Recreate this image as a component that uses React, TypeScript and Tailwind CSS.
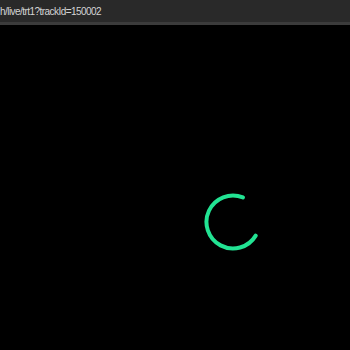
export default function App() {
  return (
    <div className="w-[350px] h-[350px] bg-black flex flex-col overflow-hidden">
      <div
        className="h-[22px] bg-[#292929] flex items-center text-[10px] tracking-[-0.55px] text-[#d4d4d4] whitespace-nowrap leading-none pt-[1px]"
        style={{ fontFamily: '"Liberation Sans", Arial, sans-serif' }}
      >
        h/live/trt1?trackId=150002
      </div>
      <div className="h-[3px] bg-[#3b3b3b]" />
      <div className="flex-1 flex justify-end items-start pt-[168px] pr-[88px]">
        <svg width="58" height="58" viewBox="0 0 58 58">
          <path
            d="M 38.9 4.4 A 26.5 26.5 0 1 0 51.7 42.6"
            fill="none"
            stroke="#22e393"
            strokeWidth="4"
            strokeLinecap="round"
          />
        </svg>
      </div>
    </div>
  );
}
